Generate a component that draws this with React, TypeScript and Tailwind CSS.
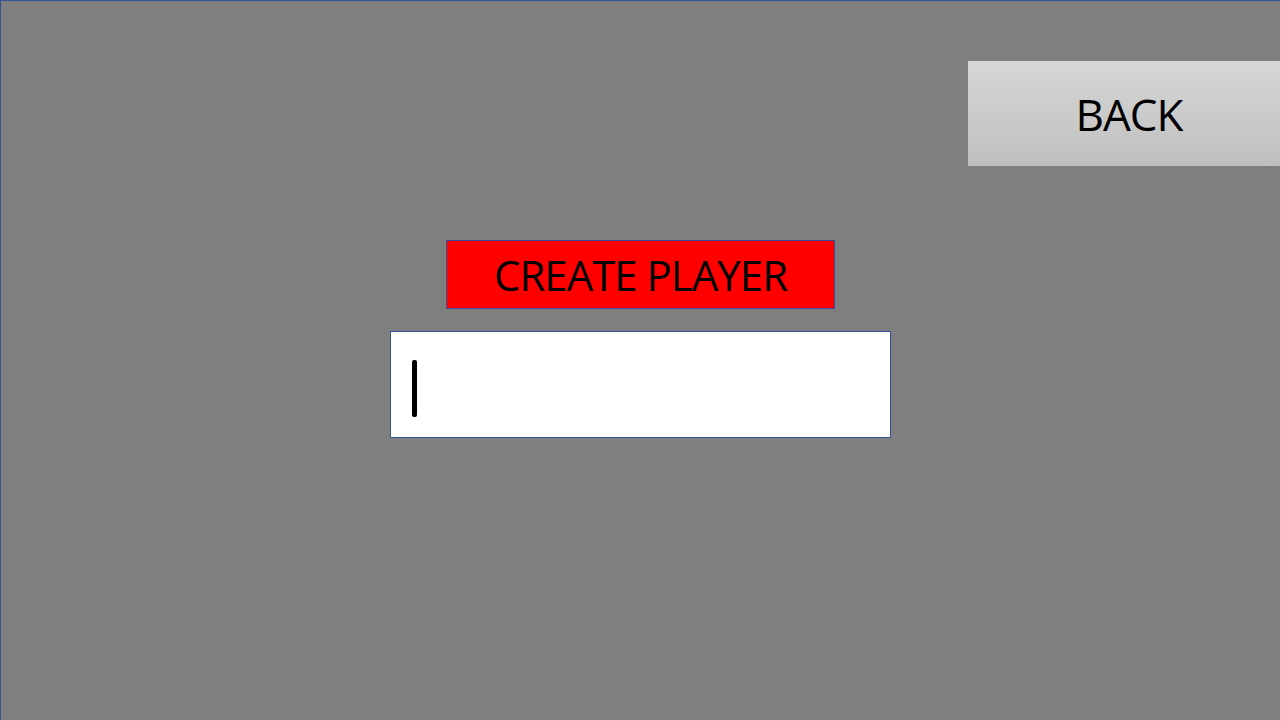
import React from "react";

export default function App() {
  return (
    <div
      className="w-[1281px] h-[721px] overflow-hidden border-l border-t border-[#2f5597] bg-[#7f7f7f] flex flex-col"
      style={{ fontFamily: '"Open Sans", "Noto Sans", sans-serif' }}
    >
      <div className="flex pl-[967px] pt-[60px]">
        <div className="w-[322px] h-[105px] shrink-0 bg-gradient-to-b from-[#d6d6d6] to-[#c0c0c0] flex items-center justify-center">
          <span className="text-[44px] leading-none text-black tracking-[-1px]">BACK</span>
        </div>
      </div>
      <div className="flex pl-[445px] mt-[74px]">
        <div className="w-[389px] h-[69px] bg-[#ff0000] border border-[#2f5597] flex items-center justify-center">
          <span className="text-[42px] leading-none text-black tracking-[-1px]">CREATE PLAYER</span>
        </div>
      </div>
      <div className="flex pl-[389px] mt-[22px]">
        <div className="w-[501px] h-[107px] bg-white border border-[#2f5597] flex items-start pt-[28px] pl-[21px]">
          <div className="w-[5px] h-[57px] bg-black rounded-[2px]" />
        </div>
      </div>
    </div>
  );
}
